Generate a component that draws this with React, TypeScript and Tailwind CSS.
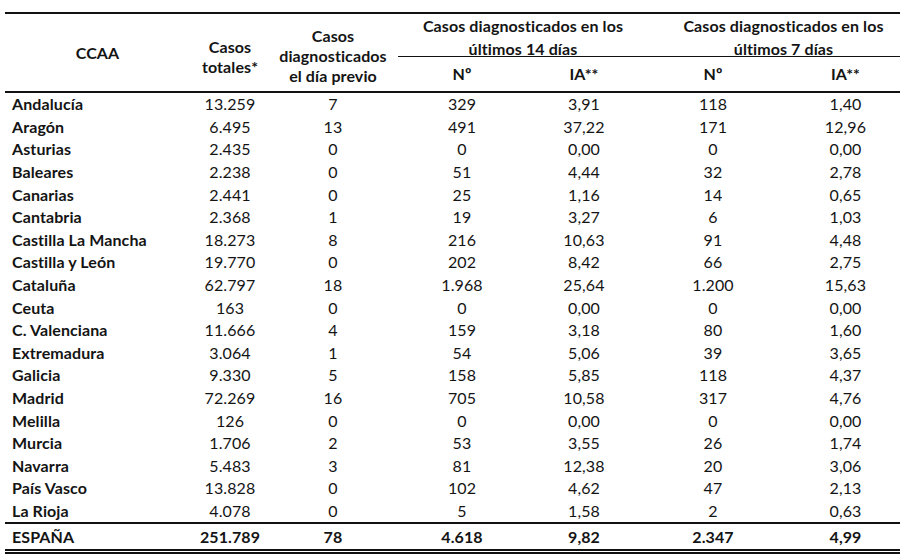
import React from "react";

const rows: [string, string, string, string, string, string, string][] = [
  ["Andalucía", "13.259", "7", "329", "3,91", "118", "1,40"],
  ["Aragón", "6.495", "13", "491", "37,22", "171", "12,96"],
  ["Asturias", "2.435", "0", "0", "0,00", "0", "0,00"],
  ["Baleares", "2.238", "0", "51", "4,44", "32", "2,78"],
  ["Canarias", "2.441", "0", "25", "1,16", "14", "0,65"],
  ["Cantabria", "2.368", "1", "19", "3,27", "6", "1,03"],
  ["Castilla La Mancha", "18.273", "8", "216", "10,63", "91", "4,48"],
  ["Castilla y León", "19.770", "0", "202", "8,42", "66", "2,75"],
  ["Cataluña", "62.797", "18", "1.968", "25,64", "1.200", "15,63"],
  ["Ceuta", "163", "0", "0", "0,00", "0", "0,00"],
  ["C. Valenciana", "11.666", "4", "159", "3,18", "80", "1,60"],
  ["Extremadura", "3.064", "1", "54", "5,06", "39", "3,65"],
  ["Galicia", "9.330", "5", "158", "5,85", "118", "4,37"],
  ["Madrid", "72.269", "16", "705", "10,58", "317", "4,76"],
  ["Melilla", "126", "0", "0", "0,00", "0", "0,00"],
  ["Murcia", "1.706", "2", "53", "3,55", "26", "1,74"],
  ["Navarra", "5.483", "3", "81", "12,38", "20", "3,06"],
  ["País Vasco", "13.828", "0", "102", "4,62", "47", "2,13"],
  ["La Rioja", "4.078", "0", "5", "1,58", "2", "0,63"],
];

const grid = "grid grid-cols-[185px_80px_126px_132px_112px_146px_119px]";

export default function App() {
  return (
    <div
      className="w-[900px] h-[554px] bg-white text-[#141414] overflow-hidden pt-[12px] pl-[5px]"
      style={{ fontFamily: "Lato, 'Open Sans', sans-serif" }}
    >
      <div className="w-[900px] text-[16px] tracking-[0.1px]">
        {/* header */}
        <div className="flex border-t-2 border-b-2 border-[#111] h-[81px] font-bold leading-[20px]">
          <div className="w-[185px] flex items-center justify-center">CCAA</div>
          <div className="w-[80px] flex items-center justify-center text-center pt-[9px]">
            Casos
            <br />
            totales*
          </div>
          <div className="w-[126px] flex items-center justify-center text-center pt-[6px]">
            Casos
            <br />
            diagnosticados
            <br />
            el día previo
          </div>
          <div className="flex-1 flex flex-col">
            <div className="flex h-[43px] border-b-[1.5px] border-[#111] ml-[2px] -mr-[2px] leading-[23px] pt-[0px]">
              <div className="w-[242px] text-center pl-[8px] whitespace-nowrap">
                Casos diagnosticados en los
                <br />
                últimos 14 días
              </div>
              <div className="flex-1 text-center pl-[20px] whitespace-nowrap">
                Casos diagnosticados en los
                <br />
                últimos 7 días
              </div>
            </div>
            <div className="flex flex-1 items-center">
              <div className="w-[132px] text-center">Nº</div>
              <div className="w-[112px] text-center">IA**</div>
              <div className="w-[146px] text-center">Nº</div>
              <div className="w-[119px] text-center">IA**</div>
            </div>
          </div>
        </div>
        {/* body */}
        <div className="border-b-2 border-[#111]">
          {rows.map((r) => (
            <div key={r[0]} className={`${grid} h-[22.6px] items-center leading-[22px]`}>
              <div className="font-bold pl-[7px] whitespace-nowrap">{r[0]}</div>
              {r.slice(1).map((c, i) => (
                <div key={i} className="text-center">
                  {c}
                </div>
              ))}
            </div>
          ))}
        </div>
        <div className={`${grid} h-[25px] items-center font-bold border-b-[5px] border-double border-[#111] box-content`}>
          <div className="pl-[7px]">ESPAÑA</div>
          <div className="text-center">251.789</div>
          <div className="text-center">78</div>
          <div className="text-center">4.618</div>
          <div className="text-center">9,82</div>
          <div className="text-center">2.347</div>
          <div className="text-center">4,99</div>
        </div>
      </div>
    </div>
  );
}
